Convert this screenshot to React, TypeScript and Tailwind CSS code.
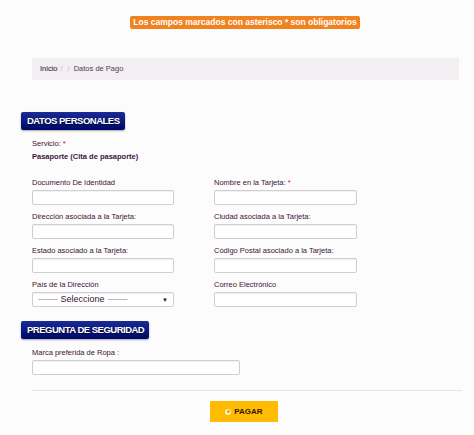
import React from "react";

// Payment form — "Datos de Pago" step, personal data + security question.
const FONT = { fontFamily: '"Liberation Sans", Arial, sans-serif' };

export default function App() {
  return (
    <div className="min-h-[435px] w-full bg-[#fcfcfc] text-[#3b1436]" style={FONT}>
      <div className="flex justify-center pl-[16px] pt-[16px]">
        <span className="rounded-[2px] bg-[#f0821f] px-[3px] text-[8.5px] font-bold leading-[13px] text-white">
          Los campos marcados con asterisco * son obligatorios
        </span>
      </div>

      <div className="ml-[32px] mr-[15px] mt-[29px] flex h-[22px] items-center bg-[#f2eef2] pl-[8px] text-[7.5px]">
        <span className="text-[#2a0a2a]">Inicio</span>
        <span className="ml-[3px] text-[#c8c0c8]">/</span>
        <span className="ml-[5px] text-[#c8c0c8]">/</span>
        <span className="ml-[4px] text-[#5b3a5b]">Datos de Pago</span>
      </div>

      <SectionHeader title="DATOS PERSONALES" width="w-[104px]" className="mt-[32px]" />

      <div className="ml-[32px] mt-[9px]">
        <div className="text-[7.5px] leading-[10px]">
          Servicio: <span className="text-[#e0102a]">*</span>
        </div>
        <div className="mt-[3px] text-[7.5px] font-bold leading-[10px]">
          Pasaporte (Cita de pasaporte)
        </div>
      </div>

      <div className="ml-[32px] mt-[16px] grid w-[325px] grid-cols-[142px_143px] gap-x-[40px] gap-y-[7px]">
        <Field label="Documento De Identidad" />
        <Field label="Nombre en la Tarjeta:" required />
        <Field label="Dirección asociada a la Tarjeta:" />
        <Field label="Ciudad asociada a la Tarjeta:" />
        <Field label="Estado asociado a la Tarjeta:" />
        <Field label="Código Postal asociado a la Tarjeta:" />
        <div>
          <div className="mb-[2px] text-[7.5px] leading-[10px]">País de la Dirección</div>
          <div className="flex h-[15px] items-center rounded-[2px] border border-[#cfcfcf] bg-white pl-[5px] pr-[5px] shadow-[inset_0_1px_1px_rgba(0,0,0,0.06)]">
            <span className="text-[6px] tracking-[-0.5px] text-[#6a4a6a]">-------------</span>
            <span className="mx-[3px] text-[9px] leading-none text-[#3b1436]">Seleccione</span>
            <span className="text-[6px] tracking-[-0.5px] text-[#6a4a6a]">-------------</span>
            <span className="ml-auto text-[6px] leading-none text-[#222]">▼</span>
          </div>
        </div>
        <Field label="Correo Electrónico" />
      </div>

      <SectionHeader title="PREGUNTA DE SEGURIDAD" width="w-[128px]" className="mt-[14px]" />

      <div className="ml-[32px] mt-[9px] w-[208px]">
        <Field label="Marca preferida de Ropa :" />
      </div>

      <div className="ml-[32px] mr-[12px] mt-[15px] border-t border-[#e6e3e6]" />

      <div className="ml-[210px] mt-[10px] flex h-[21px] w-[68px] items-center justify-center gap-[3px] bg-[#ffbb00]">
        <span className="flex h-[6px] w-[6px] items-center justify-center rounded-full bg-[#fff3c8]">
          <span className="h-[2.5px] w-[2.5px] rounded-full bg-[#f0a000]" />
        </span>
        <span className="text-[8px] font-bold leading-none text-[#3a1500]">PAGAR</span>
      </div>
    </div>
  );
}

function SectionHeader({
  title,
  width,
  className,
}: {
  title: string;
  width: string;
  className?: string;
}) {
  return (
    <div
      className={`ml-[21px] flex h-[18px] items-center rounded-[2px] bg-gradient-to-b from-[#1b2a96] to-[#000866] pl-[6px] shadow-[0_1px_2px_rgba(0,0,0,0.35)] ${width} ${className ?? ""}`}
    >
      <span className="text-[9.5px] font-bold leading-none tracking-[-0.5px] text-white [text-shadow:0_1px_1px_rgba(0,0,0,0.6)]">
        {title}
      </span>
    </div>
  );
}

function Field({ label, required }: { label: string; required?: boolean }) {
  return (
    <div>
      <div className="mb-[2px] text-[7.5px] leading-[10px]">
        {label}
        {required && <span className="text-[#e0102a]"> *</span>}
      </div>
      <div className="h-[15px] rounded-[2px] border border-[#cfcfcf] bg-white shadow-[inset_0_1px_1px_rgba(0,0,0,0.06)]" />
    </div>
  );
}
